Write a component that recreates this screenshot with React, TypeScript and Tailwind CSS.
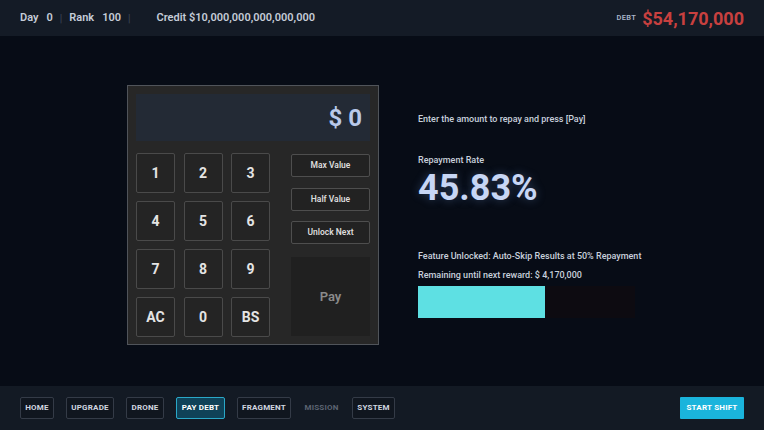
import React from "react";

const font = { fontFamily: "Roboto, 'Noto Sans', sans-serif" };

function Key({ label }: { label: string }) {
  return (
    <div className="w-[39px] h-[40px] border border-[#4a4a4a] bg-[#242424] rounded-[2px] flex items-center justify-center text-[14px] font-bold text-[#e4e4e4]">
      {label}
    </div>
  );
}

function SideBtn({ label }: { label: string }) {
  return (
    <div className="w-[79px] h-[23px] border border-[#4e4e4e] bg-[#222222] rounded-[2px] flex items-center justify-center text-[8.5px] font-semibold text-[#dcdcdc]">
      {label}
    </div>
  );
}

function NavBtn({ label, w, active, muted }: { label: string; w: string; active?: boolean; muted?: boolean }) {
  let cls = "border border-[#343b47] bg-[#10161f] text-[#d0d6e0]";
  if (active) cls = "border border-[#2aa8c8] bg-[#0f4258] text-[#ffffff]";
  if (muted) cls = "border border-transparent text-[#5c6472]";
  return (
    <div className={`${w} h-[22px] rounded-[2px] flex items-center justify-center text-[8px] font-bold tracking-[0.2px] ${cls}`}>
      {label}
    </div>
  );
}

export default function App() {
  const keys = ["1", "2", "3", "4", "5", "6", "7", "8", "9", "AC", "0", "BS"];
  return (
    <div className="w-[764px] h-[430px] flex flex-col bg-[#070c16] overflow-hidden" style={font}>
      {/* Header */}
      <div className="h-[36px] bg-[#141b26] flex items-center px-[20px] text-[11px] font-semibold text-[#c5ccd8] shrink-0">
        <span>Day</span>
        <span className="ml-[8px]">0</span>
        <span className="ml-[7px] text-[#3a4352] text-[10px]">|</span>
        <span className="ml-[7px]">Rank</span>
        <span className="ml-[8px]">100</span>
        <span className="ml-[7px] text-[#3a4352] text-[10px]">|</span>
        <span className="ml-[26px]">Credit $10,000,000,000,000,000</span>
        <div className="ml-auto flex items-center">
          <span className="text-[7.5px] font-semibold text-[#a8b4c8] tracking-[0.3px]">DEBT</span>
          <span className="ml-[6px] text-[18px] font-bold text-[#c8403f]">$54,170,000</span>
        </div>
      </div>

      {/* Main */}
      <div className="flex-1 flex pl-[127px] pt-[49px]">
        <div className="w-[252px] h-[260px] border border-[#50545a] bg-[#272727] p-[8px] pb-[7px] flex flex-col">
          <div className="h-[48px] bg-[#232a35] flex items-center justify-end pr-[8px] text-[24px] font-bold text-[#b9c9ea]">
            $ 0
          </div>
          <div className="mt-[12px] flex">
            <div className="grid grid-cols-3 gap-x-[8.5px] gap-y-[8px]">
              {keys.map((k) => (
                <Key key={k} label={k} />
              ))}
            </div>
            <div className="ml-[21px] flex flex-col pt-[1px]">
              <SideBtn label="Max Value" />
              <div className="mt-[11px]">
                <SideBtn label="Half Value" />
              </div>
              <div className="mt-[10px]">
                <SideBtn label="Unlock Next" />
              </div>
              <div className="mt-[13px] w-[79px] h-[79px] bg-[#202020] flex items-center justify-center text-[13px] font-semibold text-[#8a8a8a]">
                Pay
              </div>
            </div>
          </div>
        </div>

        <div className="ml-[39px] flex flex-col pt-[28px] text-[#c8d0dc]">
          <div className="text-[9px] font-medium leading-[12px]">Enter the amount to repay and press [Pay]</div>
          <div className="mt-[29px] text-[9px] font-medium leading-[12px]">Repayment Rate</div>
          <div
            className="mt-[2px] text-[36px] font-bold leading-[40px] text-[#c7d6f5]"
            style={{ textShadow: "0 0 10px rgba(120,160,230,0.35)" }}
          >
            45.83%
          </div>
          <div className="mt-[42px] text-[9px] font-medium leading-[12px]">
            Feature Unlocked: Auto-Skip Results at 50% Repayment
          </div>
          <div className="mt-[7px] text-[9px] font-medium leading-[12px]">Remaining until next reward: $ 4,170,000</div>
          <div className="mt-[5px] w-[217px] h-[32px] bg-[#0d0b11] flex">
            <div className="h-full bg-[#5ee0e3]" style={{ width: "127px" }} />
          </div>
        </div>
      </div>

      {/* Footer */}
      <div className="h-[44px] bg-[#131a24] flex items-center px-[20px] shrink-0">
        <div className="flex items-center gap-[12px]">
          <NavBtn label="HOME" w="w-[34px]" />
          <NavBtn label="UPGRADE" w="w-[48px]" />
          <NavBtn label="DRONE" w="w-[38px]" />
          <NavBtn label="PAY DEBT" w="w-[49px]" active />
          <NavBtn label="FRAGMENT" w="w-[54px]" />
          <NavBtn label="MISSION" w="w-[37px]" muted />
          <NavBtn label="SYSTEM" w="w-[43px]" />
        </div>
        <div className="ml-auto w-[64px] h-[22px] bg-[#1ab4dc] rounded-[1px] flex items-center justify-center text-[8px] font-bold text-white tracking-[0.2px]">
          START SHIFT
        </div>
      </div>
    </div>
  );
}
